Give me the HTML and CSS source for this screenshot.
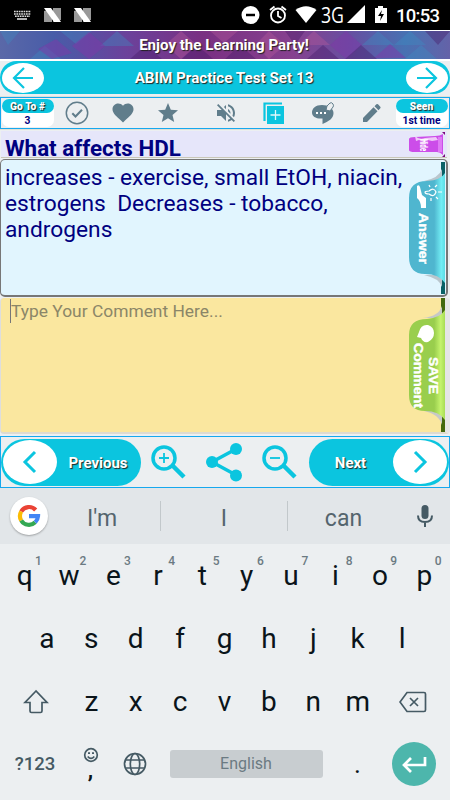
FILE: index.html
```
<!DOCTYPE html>
<html lang="en">
<head>
    <meta charset="UTF-8">
    <meta name="viewport" content="width=device-width, initial-scale=1.0">
    <title>ABIM Practice Test Set 13</title>
    <link rel="stylesheet" href="styles.css">
</head>
<body>

    <div class="status">
        <svg width="450" height="30" viewBox="0 0 450 30">
            <g stroke="#ddd" stroke-width="1.6" fill="none">
                <path d="M14 11.5h17M14 14h17M15 16.3h15" stroke-dasharray="1.7 .7"/>
                <path d="M17 19h10"/>
            </g>
            <g id="n-logo">
                <path d="M44 11l8-2v13h-8zM53 8h8v12l-8 2z" fill="#999"/>
                <path d="M44 8h7l10 14h-7z" fill="#fff"/>
            </g>
            <use href="#n-logo" x="30"/>
            <circle cx="250.500" cy="15" r="9" fill="#fff"/>
            <path d="M246 15h9" stroke="#000" stroke-width="2.500"/>
            <g stroke="#fff" fill="none" stroke-width="1.800">
                <circle cx="278" cy="15.500" r="7"/>
                <path d="M278 11v5l3.500 2M270 10l4.500-3.500M286 10l-4.500-3.500"/>
            </g>
            <path d="M295.500 10q10.500-7.500 21 0L306 23z" fill="#fff"/>
            <path d="M365 5v18h-18z" fill="#fff"/>
            <path d="M378 6h5v2h4v15h-12V8h3z" fill="#fff"/>
            <path d="M382 10l-4 6h3l-1 5 4-7h-3z" fill="#000"/>
            <text class="net" x="321" y="22.500" textLength="23" lengthAdjust="spacingAndGlyphs">3G</text>
            <text class="clock" x="396" y="22" textLength="44">10:53</text>
        </svg>
    </div>

    <div class="banner">
        <svg class="banner-bg" width="450" height="28" viewBox="0 0 450 28">
            <defs>
                <linearGradient id="party">
                    <stop offset="0" stop-color="#5a68a8"/>
                    <stop offset=".12" stop-color="#485ca8"/>
                    <stop offset=".28" stop-color="#6b429b"/>
                    <stop offset=".45" stop-color="#793082"/>
                    <stop offset=".65" stop-color="#86418f"/>
                    <stop offset=".78" stop-color="#6650a1"/>
                    <stop offset=".9" stop-color="#4871b2"/>
                    <stop offset="1" stop-color="#6462a8"/>
                </linearGradient>
            </defs>
            <path d="M0 0h450v28H0z" fill="url(#party)"/>
            <path d="M60 0l16 13L92 0zM100 15L117 0l17 15zM30 28l15-13 16 13zM362 14l16-14 16 14zM394 14l16-14 16 14zM405 28l16-14 16 14zM0 0h20L8 14z" fill="#3b8fc4" opacity=".35"/>
            <path d="M38 18l18-10 16 14-20 6zM72 15l17-14 16 14-16 13zM330 14l16-14 16 14-16 14zM374 27l16-14 16 14z" fill="#7e38a8" opacity=".5"/>
            <path d="M165 14l16-14 16 14-16 14zM255 14l14-14 16 14-16 14zM298 14l16-14 16 14zM210 0h28l-14 12z" fill="#b35a9c" opacity=".4"/>
            <path d="M130 28l16-14 16 14zM182 28l15-14 16 14zM225 28l15-14 16 14zM307 28l16-14 16 14zM285 0h20l-10 14zM345 28l16-14 16 14zM425 0h25l-12 14z" fill="#461b68" opacity=".4"/>
        </svg>
        <span class="banner-text">Enjoy the Learning Party!</span>
    </div>

    <div class="title-bar">
        <button class="round">
            <svg width="24" height="24" viewBox="0 0 24 24"><path d="M22 12H3M13 2L3 12l10 10"/></svg>
        </button>
        <span class="title">ABIM Practice Test Set 13</span>
        <button class="round">
            <svg width="24" height="24" viewBox="0 0 24 24"><path d="M2 12h19M11 2l10 10-10 10"/></svg>
        </button>
    </div>

    <div class="tools">
        <div class="badge"><b>Go To #</b><span>3</span></div>
        <svg width="24" height="24" viewBox="0 0 24 24" fill="none" stroke="#607d8b" stroke-width="1.500"><circle cx="12" cy="12" r="10.700"/><path d="M7.300 12.200l3.200 3.300 6.500-6.800" stroke-width="2"/></svg>
        <svg width="24" height="24" viewBox="0 0 24 24" fill="#607d8b"><path d="M12 21.500l-1.500-1.400C5.400 15.400 1.500 12.300 1.500 8.300 1.500 5 4 2.500 7.200 2.500c1.900 0 3.600.9 4.800 2.300 1.200-1.400 2.900-2.300 4.800-2.300 3.200 0 5.700 2.500 5.700 5.800 0 4-3.900 7.100-9 11.800z"/></svg>
        <svg width="24" height="24" viewBox="0 0 24 24" fill="#607d8b"><path d="M12 17.300l6.200 3.700-1.700-7 5.500-4.700-7.200-.6L12 2 9.200 8.700 2 9.300 7.500 14l-1.700 7z"/></svg>
        <svg class="mute" width="24" height="24" viewBox="0 0 24 24" fill="#607d8b"><path d="M16.500 12c0-1.770-1.020-3.290-2.500-4.030v2.210l2.450 2.450c.03-.2.050-.41.050-.63zm2.500 0c0 .94-.2 1.820-.54 2.640l1.510 1.510C20.630 14.910 21 13.500 21 12c0-4.280-2.990-7.860-7-8.770v2.060c2.890.86 5 3.540 5 6.710zM4.270 3L3 4.270 7.730 9H3v6h4l5 5v-6.730l4.250 4.250c-.67.52-1.420.93-2.250 1.180v2.060c1.380-.31 2.630-.95 3.690-1.810L19.730 21 21 19.730l-9-9L4.270 3zM12 4L9.910 6.090 12 8.180V4z"/></svg>
        <svg width="24" height="24" viewBox="0 0 24 24"><path d="M2.500 20V2.500H20" stroke="#0bc5df" stroke-width="2.200" fill="none"/><path d="M5 5h17v18H5z" fill="#0bc5df"/><path d="M13.500 9v10M8.500 14h10" stroke="#dff8fb" stroke-width="1.300"/></svg>
        <svg width="24" height="24" viewBox="0 0 24 24"><path d="M11 4C4.500 4 1 7.500 1 11.500S5 18 11.500 17.500V23c6-2.500 11-5.500 11-11C22.500 7 17 4 11 4z" fill="#607d8b"/><path d="M5 12h2M9 12h2M13 12h2" stroke="#fff" stroke-width="2"/><path d="M15 9l1-4 3-3q2-1 3 1t0 3l-3 4z" fill="#eceff1" stroke="#607d8b"/></svg>
        <svg width="24" height="24" viewBox="0 0 24 24" fill="#607d8b"><path d="M4 17v4h4L18.500 10.200l-4-4zM15.500 5.200l4 4 1.800-1.900q.7-.8 0-1.600l-2.300-2.400q-.8-.7-1.600 0z"/></svg>
        <div class="badge"><b>Seen</b><span>1st time</span></div>
    </div>

    <div class="card question">
        <span class="question-text">What affects HDL</span>
        <svg class="tab" width="40" height="26" viewBox="0 0 40 26">
            <path d="M2 7q0-2 6-2l20-1q5 0 8-2v21q-3-3-6-3H8q-6 0-6-2z" fill="#cc4de9"/>
            <path d="M33 5v15" stroke="#df7bf5" stroke-width="4"/>
            <path d="M35 0h3v3zM35 25h3v-3z" fill="#7b087d"/>
            <path d="M8 4q4 4 10 2l11-1 2 3-6 1-4-1-4 2-5-2-3 1z" fill="#f4d6fa" opacity=".9"/>
            <text class="tab-mini" transform="translate(13 7) rotate(90) scale(.58 1)">Hide</text>
        </svg>
    </div>

    <div class="card answer">
        <p class="answer-text">increases - exercise, small EtOH, niacin,<br>estrogens&nbsp; Decreases - tobacco,<br>androgens</p>
        <svg class="tab" width="40" height="134" viewBox="0 0 40 134">
            <defs>
                <linearGradient id="blue-tab"><stop offset=".7" stop-color="#4fb6cf"/><stop offset=".9" stop-color="#72edf4"/><stop offset="1" stop-color="#5bdce4"/></linearGradient>
            </defs>
            <path d="M34 1h4v18h-4zM34 115h4v18h-4z" fill="#086065"/>
            <path d="M35 8Q32 17 17 20h18zM35 126q-3-9-18-12h18z" fill="#b9c6cd"/>
            <path d="M38 12Q34 19 20 20 2 20 2 37v59q0 17 16 17 14 0 20 9z" fill="url(#blue-tab)"/>
            <path d="M10 25q2-2 3 1l2 8 4 3v10h-5q0-7-4-10z" fill="#fff"/>
            <path d="M18 31q0-1 4-1 5-4 7 1-2 6-7 2-4 0-4-2zM23 26l-1-2M28 26l2-2M31 31h4M29 36l2 2M24 37v3" fill="none" stroke="#fff" stroke-width="1.200"/>
            <text class="tab-text" transform="translate(12 52) rotate(90)" textLength="51" lengthAdjust="spacingAndGlyphs">Answer</text>
        </svg>
    </div>

    <div class="card comment">
        <div class="comment-field"><i class="caret"></i>Type Your Comment Here...</div>
        <svg class="tab" width="40" height="135" viewBox="0 0 40 135">
            <defs>
                <linearGradient id="green-tab"><stop offset=".7" stop-color="#99ce4d"/><stop offset=".88" stop-color="#c5f36d"/><stop offset="1" stop-color="#a8dd54"/></linearGradient>
            </defs>
            <path d="M34 0h4v18h-4zM34 117h4v17h-4z" fill="#43680e"/>
            <path d="M35 8Q32 18 16 20h19zM35 127q-3-11-18-14h18z" fill="#c6c9c7"/>
            <path d="M38 12Q33 20 20 21 2 21 2 37v60q0 16 16 16 14 0 20 9z" fill="url(#green-tab)"/>
            <path d="M12 34q2-8 9-7 6 2 6 8t-6 9q-5 1-7-4l-4-1z" fill="#fff"/>
            <text class="tab-text" transform="translate(22 59) rotate(90)" textLength="37" lengthAdjust="spacingAndGlyphs">SAVE</text>
            <text class="tab-text" transform="translate(7 45) rotate(90)" textLength="65" lengthAdjust="spacingAndGlyphs">Comment</text>
        </svg>
    </div>

    <div class="nav">
        <button class="pill prev">
            <span class="knob"><svg width="22" height="24" viewBox="0 0 22 24"><path d="M16 2L6 12l10 10"/></svg></span>
            <span class="pill-text">Previous</span>
        </button>
        <div class="nav-icons">
            <svg width="36" height="36" viewBox="0 0 36 36"><g fill="none" stroke="#0bc5df"><circle cx="14" cy="14" r="11" stroke-width="3.500"/><path d="M23 22l11 11" stroke-width="4.500"/><path d="M14 9v10M9 14h10" stroke-width="1.800"/></g></svg>
            <svg width="38" height="40" viewBox="0 0 38 40"><path d="M31 7L7 20l24 13" fill="none" stroke="#0bc5df" stroke-width="3.500"/><g fill="#0bc5df"><circle cx="31" cy="7" r="6"/><circle cx="7" cy="20" r="6"/><circle cx="31" cy="33.500" r="6"/></g></svg>
            <svg width="36" height="36" viewBox="0 0 36 36"><g fill="none" stroke="#0bc5df"><circle cx="14" cy="14" r="11" stroke-width="3.500"/><path d="M23 22l11 11" stroke-width="4.500"/><path d="M9 14h10" stroke-width="1.800"/></g></svg>
        </div>
        <button class="pill next">
            <span class="pill-text">Next</span>
            <span class="knob"><svg width="22" height="24" viewBox="0 0 22 24"><path d="M6 2l10 10L6 22"/></svg></span>
        </button>
    </div>

    <div class="suggest">
        <div class="google">
            <svg width="24" height="24" viewBox="0 0 24 24" fill="none" stroke-width="4.200">
                <path d="M18.700 6A9 9 0 0 0 4.200 7.500" stroke="#ea4335"/>
                <path d="M4.200 7.500a9 9 0 0 0 0 9" stroke="#fbbc05"/>
                <path d="M4.200 16.500a9 9 0 0 0 14 1.800" stroke="#34a853"/>
                <path d="M18.200 18.300a9 9 0 0 0 2.800-6.100h-9" stroke="#4285f4"/>
            </svg>
        </div>
        <span class="word">I'm</span>
        <span class="word">I</span>
        <span class="word">can</span>
        <svg class="mic" width="18" height="24" viewBox="0 0 18 24"><rect x="5.500" y="1" width="7" height="14" rx="3.500" fill="#455a64"/><path d="M2 11.500q0 6.500 7 6.500t7-6.500M9 18v5" fill="none" stroke="#455a64" stroke-width="2"/></svg>
    </div>

    <div class="keyboard">
        <div class="row">
            <span>q<sup>1</sup></span><span>w<sup>2</sup></span><span>e<sup>3</sup></span><span>r<sup>4</sup></span><span>t<sup>5</sup></span><span>y<sup>6</sup></span><span>u<sup>7</sup></span><span>i<sup>8</sup></span><span>o<sup>9</sup></span><span>p<sup>0</sup></span>
        </div>
        <div class="row">
            <span>a</span><span>s</span><span>d</span><span>f</span><span>g</span><span>h</span><span>j</span><span>k</span><span>l</span>
        </div>
        <div class="row">
            <span class="wide"><svg width="26" height="26" viewBox="0 0 26 26"><path d="M13 2L2 13.500h5V22q0 1.500 1.500 1.500h9q1.500 0 1.500-1.500v-8.500h5z"/></svg></span>
            <span>z</span><span>x</span><span>c</span><span>v</span><span>b</span><span>n</span><span>m</span>
            <span class="wide"><svg width="28" height="22" viewBox="0 0 28 22"><path d="M8 1.500h17q1.500 0 1.500 1.500v16q0 1.500-1.500 1.500H8L1 11zM11 7l8 8M19 7l-8 8"/></svg></span>
        </div>
        <div class="bottom">
            <span class="sym">?123</span>
            <span class="comma"><svg width="16" height="16" viewBox="0 0 16 16"><circle cx="8" cy="8" r="6.300"/><path d="M4.700 9.500q3.300 3.800 6.600 0M5 6.200h2M9 6.200h2"/></svg><b>,</b></span>
            <span class="globe"><svg width="24" height="24" viewBox="0 0 24 24"><circle cx="12" cy="12" r="10.500"/><ellipse cx="12" cy="12" rx="4.700" ry="10.500"/><path d="M2.500 8h19M2.500 16h19"/></svg></span>
            <span class="space">English</span>
            <span class="dot">.</span>
            <span class="enter"><svg width="26" height="18" viewBox="0 0 26 18"><path d="M24 2v8H3M10 3L3 10l7 7"/></svg></span>
        </div>
    </div>

</body>
</html>
```
FILE: styles.css
```
* {
    box-sizing: border-box;
}
body {
    margin: 0;
    width: 450px;
    height: 800px;
    overflow: hidden;
    font-family: Roboto, sans-serif;
    background: #eceff1;
}
svg {
    display: block;
    flex-shrink: 0;
}
button {
    border: none;
    padding: 0;
    font-family: inherit;
}
.status {
    height: 30px;
    background: #000;
}
.net {
    font-family: "Open Sans", sans-serif;
    font-size: 22px;
    fill: #fff;
}
.clock {
    font-size: 18.5px;
    font-weight: 500;
    fill: #fff;
}
.banner {
    position: relative;
    display: flex;
    align-items: center;
    justify-content: center;
    height: 31px;
    border-top: 1px solid #fff;
    border-bottom: 2px solid #fff;
}
.banner-bg {
    position: absolute;
    top: 0;
    left: 0;
}
.banner-text, .title, .pill-text {
    position: relative;
    font-weight: bold;
    color: #fff;
    text-shadow: 1px 1px 1px #222;
}
.banner-text {
    padding-right: 2px;
    font-size: 15.1px;
    white-space: nowrap;
}
.title-bar {
    display: flex;
    align-items: center;
    justify-content: space-between;
    height: 33px;
    padding: 0 2px;
    background: #0bc5df;
    border-radius: 17px;
}
.title {
    padding-right: 2px;
    font-size: 15.2px;
}
.round {
    display: flex;
    align-items: center;
    justify-content: center;
    width: 42px;
    height: 30px;
    border-radius: 50%;
    background: #fff;
}
.round svg, .knob svg {
    fill: none;
    stroke: #0bc5df;
    stroke-width: 2.2;
}
.tools {
    display: grid;
    grid-template-columns: 53px 46px 46px 44px 60px 48px 50px 46px 55px;
    align-items: center;
    justify-items: center;
    height: 32px;
    margin-top: 3px;
    border: 1px solid #16a8ee;
    outline: 1px solid #e0e0d8;
}
.mute {
    margin-left: 12px;
}
.badge {
    width: 52px;
    height: 28px;
    border-radius: 7px;
    background: #fff;
    font-size: 10.3px;
    font-weight: bold;
    line-height: 15px;
    text-align: center;
    color: #000080;
}
.badge b {
    display: block;
    height: 14px;
    border-radius: 7px;
    background: #0bc5df;
    color: #fff;
    text-shadow: 1px 1px 1px #222;
}
.badge span {
    display: block;
}
.card {
    position: relative;
    color: #000080;
}
.tab {
    position: absolute;
    right: 3px;
    top: 1px;
}
.tab-text {
    font-family: "Liberation Sans", Arial, sans-serif;
    font-size: 13px;
    font-weight: bold;
    fill: #fff;
    stroke: #fff;
    stroke-width: .4;
}
.tab-mini {
    font-size: 10px;
    font-weight: bold;
    fill: #fff;
}
.question {
    height: 27px;
    margin: 2px 3px 1px 1px;
    padding: 3px 4px 0;
    background: #e6e6fa;
    border-bottom: 1px solid #c9c7b8;
    font-size: 22.4px;
    font-weight: bold;
    line-height: 29px;
}
.question .tab {
    right: 0;
}
.answer {
    height: 138px;
    margin-right: 2px;
    padding: 5px 4px;
    background: #e1f5fe;
    border: 1px solid #777;
    border-width: 1px 2px 2px 1px;
    border-radius: 5px;
}
.answer .tab {
    right: -1px;
}
.answer-text {
    margin: 0;
    font-size: 22.75px;
    line-height: 26px;
    white-space: nowrap;
}
.comment {
    height: 136px;
    margin-top: 1px;
    background: #fae79f;
    border-right: 5px solid #e5e5e5;
    border-bottom: 2px solid #dedbd0;
    border-left: 1px solid #ddd;
    border-radius: 4px;
}
.comment .tab {
    right: -2px;
    top: 0;
}
.comment-field {
    display: flex;
    align-items: center;
    height: 26px;
    padding-left: 9px;
    font-size: 17.4px;
    color: #8b8668;
}
.caret {
    width: 1px;
    height: 24px;
    background: #777;
}
.nav {
    display: flex;
    align-items: center;
    height: 52px;
    margin-top: 2px;
    border: 1px solid #16a8ee;
}
.pill {
    display: flex;
    align-items: center;
    width: 140px;
    height: 47px;
    padding: 0 2px;
    background: #0bc5df;
    border-radius: 24px;
}
.pill-text {
    flex: 1;
    padding-top: 2px;
    font-size: 15px;
    text-align: center;
}
.next .pill-text {
    padding-right: 3px;
}
.knob {
    display: flex;
    align-items: center;
    justify-content: center;
    width: 54px;
    height: 44px;
    border-radius: 50%;
    background: #fff;
}
.knob svg {
    stroke-width: 3;
}
.nav-icons {
    display: flex;
    flex: 1;
    align-items: center;
    justify-content: space-between;
    padding: 0 12px 0 9px;
}
.suggest {
    display: grid;
    grid-template-columns: 58px 103px 127px 111px 51px;
    align-items: center;
    justify-items: center;
    height: 56px;
    background: #e2e6e9;
    font-size: 23px;
    color: #55656e;
}
.google {
    display: flex;
    align-items: center;
    justify-content: center;
    width: 38px;
    height: 38px;
    border-radius: 50%;
    background: #fff;
    box-shadow: 0 1px 2px rgba(0, 0, 0, 0.3);
}
.word {
    width: 100%;
    height: 30px;
    line-height: 35px;
    padding-right: 14px;
    border-right: 1px solid #c2c8cb;
    text-align: center;
}
.word:nth-child(3) {
    padding-right: 0;
}
.word:nth-child(4) {
    padding-right: 0;
    border: none;
}
.keyboard {
    height: 256px;
    background: #eceff1;
    color: #0a141a;
}
.row {
    display: flex;
    justify-content: center;
    height: 63px;
    padding-right: 1px;
    font-size: 28px;
    line-height: 63px;
}
.row span {
    position: relative;
    width: 44.4px;
    text-align: center;
}
.row sup {
    position: absolute;
    right: 5px;
    top: 11px;
    font-size: 12px;
    font-weight: 500;
    line-height: 12px;
    color: #6b7a82;
}
.row .wide {
    display: flex;
    align-items: center;
    justify-content: center;
    width: 66px;
}
.keyboard svg {
    fill: none;
    stroke: #455a64;
    stroke-width: 1.7;
}
.bottom {
    display: grid;
    grid-template-columns: 70px 43px 44px 178px 45px 68px;
    align-items: center;
    justify-items: center;
    height: 62px;
}
.sym {
    font-size: 18.5px;
    font-weight: 500;
    color: #455a64;
}
.comma {
    display: flex;
    flex-direction: column;
    align-items: center;
    padding: 0 2px 4px 0;
    font-size: 22px;
    line-height: 15px;
}
.space {
    width: 153px;
    border-radius: 3px;
    background: #c8cdd0;
    font-size: 16px;
    line-height: 28px;
    text-align: center;
    color: #6b7a82;
}
.dot {
    font-size: 26px;
}
.enter {
    display: flex;
    align-items: center;
    justify-content: center;
    width: 44px;
    height: 44px;
    border-radius: 50%;
    background: #4db6ac;
}
.enter svg {
    stroke: #fff;
    stroke-width: 2.7;
}
```
